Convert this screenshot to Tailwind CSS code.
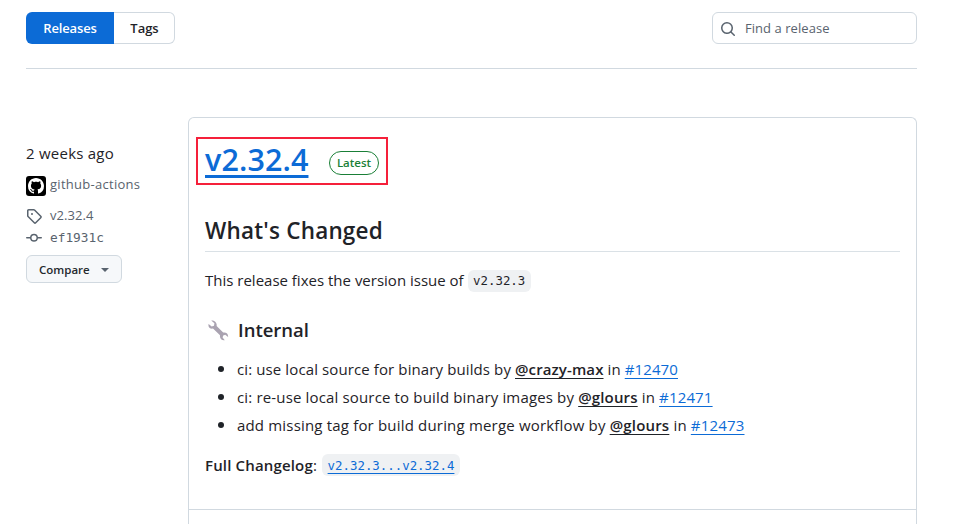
<!DOCTYPE html>
<html lang="en">
<head>
<meta charset="utf-8">
<title>Releases</title>
<script src="https://cdn.jsdelivr.net/npm/@tailwindcss/browser@4"></script>
</head>
<body class="h-[524px] overflow-hidden bg-white pl-[26px] pr-[50px] pt-3 font-['Open_Sans','Noto_Sans',sans-serif] text-[15px] text-[#1f2328]">
<header class="flex h-[57px] justify-between border-b border-[#d1d9e0]">
  <nav class="flex h-8 w-[149px] text-[13px] font-semibold leading-8">
    <a class="w-[88px] rounded-l-md bg-[#0c6bd6] text-center tracking-[-0.14px] text-white">Releases</a>
    <a class="flex-1 rounded-r-md border border-l-0 border-[#d1d9e0] pl-px text-center leading-[30px]">Tags</a>
  </nav>
  <label class="flex h-8 w-[205px] items-center rounded-md border border-[#d1d9e0] pl-[7px] text-[13px] text-[#59636e]">
    <svg class="mr-[9px] mt-px size-4" viewBox="0 0 16 16" fill="currentColor"><path d="M10.68 11.74a6 6 0 0 1-7.922-8.982 6 6 0 0 1 8.982 7.922l3.04 3.04a.749.749 0 1 1-1.06 1.06l-3.04-3.04ZM11.5 7a4.499 4.499 0 1 0-8.997 0A4.499 4.499 0 0 0 11.5 7Z"/></svg>
    <span class="mt-px tracking-[0.05px]">Find a release</span>
  </label>
</header>
<main class="mt-12 flex">
  <aside class="w-[162px] pt-6 text-[13px] text-[#59636e]">
    <div class="h-6 text-[15px] leading-6 text-[#1f2328]"><span class="tracking-[0.24px]">2 weeks ago</span></div>
    <div class="mt-[11px] flex h-5 items-center gap-1">
      <span class="flex size-5 items-center justify-center rounded-[3px] bg-black text-white"><svg class="size-4" viewBox="0 0 16 16" fill="currentColor"><path d="M8 0c4.42 0 8 3.58 8 8a8.013 8.013 0 0 1-5.45 7.59c-.4.08-.55-.17-.55-.38 0-.27.01-1.13.01-2.2 0-.75-.25-1.23-.54-1.48 1.78-.2 3.65-.88 3.65-3.95 0-.88-.31-1.59-.82-2.15.08-.2.36-1.02-.08-2.12 0 0-.67-.22-2.2.82-.64-.18-1.32-.27-2-.27-.68 0-1.36.09-2 .27-1.53-1.03-2.2-.82-2.2-.82-.44 1.1-.16 1.92-.08 2.12-.51.56-.82 1.28-.82 2.15 0 3.06 1.86 3.75 3.64 3.95-.23.2-.44.55-.51 1.07-.46.21-1.61.55-2.33-.66-.15-.24-.6-.83-1.23-.82-.67.01-.27.38.01.53.34.19.73.9.82 1.13.16.45.68 1.31 2.69.94 0 .67.01 1.3.01 1.49 0 .21-.15.45-.55.38A7.995 7.995 0 0 1 0 8c0-4.42 3.58-8 8-8Z"/></svg></span>
      <span class="-mt-[5px] leading-5 tracking-[0.28px]">github-actions</span>
    </div>
    <div class="mt-[9px] flex h-[22px] items-center gap-2">
      <svg class="size-4" viewBox="0 0 16 16" fill="currentColor"><path d="M1 7.775V2.75C1 1.784 1.784 1 2.75 1h5.025c.464 0 .91.184 1.238.513l6.25 6.25a1.75 1.75 0 0 1 0 2.474l-5.026 5.026a1.75 1.75 0 0 1-2.474 0l-6.25-6.25A1.752 1.752 0 0 1 1 7.775Zm1.5 0c0 .066.026.13.073.177l6.25 6.25a.25.25 0 0 0 .354 0l5.025-5.025a.25.25 0 0 0 0-.354l-6.25-6.25a.25.25 0 0 0-.177-.073H2.75a.25.25 0 0 0-.25.25ZM6 5a1 1 0 1 1 0 2 1 1 0 0 1 0-2Z"/></svg>
      <span class="tracking-[0.08px]">v2.32.4</span>
    </div>
    <div class="flex h-[22px] items-center gap-2">
      <svg class="size-4" viewBox="0 0 16 16" fill="currentColor"><path d="M11.93 8.5a4.002 4.002 0 0 1-7.86 0H.75a.75.75 0 0 1 0-1.5h3.32a4.002 4.002 0 0 1 7.86 0h3.32a.75.75 0 0 1 0 1.5Zm-1.43-.75a2.5 2.5 0 1 0-5 0 2.5 2.5 0 0 0 5 0Z"/></svg>
      <span class="font-['DejaVu_Sans_Mono',monospace] text-[12.8px]">ef1931c</span>
    </div>
    <button class="mt-[6px] flex h-7 w-24 items-center justify-between rounded-md border border-[#d1d9e0] bg-[#f6f8fa] pl-3 pr-3 text-[11.5px] font-semibold text-[#25292e]"><span class="mt-0.5">Compare</span><svg class="mt-px h-1 w-2" viewBox="0 0 8 4" fill="#59636e"><path d="M0 0h8L4 4Z"/></svg></button>
  </aside>
  <article class="h-[430px] flex-1 rounded-t-md border border-b-0 border-[#d1d9e0]">
    <section class="h-[392px] border-b border-[#d1d9e0] pl-[16px] pr-4 pt-[19px]">
      <div class="-ml-[9px] flex h-12 w-48 items-center border-2 border-[#f5203a] pl-[7px]">
        <h1 class="-mt-1 w-[124px] text-[30.5px] font-semibold leading-[44px] text-[#0c6bd6]"><a class="tracking-[0.1px] underline decoration-[3px] underline-offset-[4px] [text-decoration-skip-ink:none]">v2.32.4</a></h1>
        <span class="mt-1 flex h-6 w-[50px] items-center justify-center rounded-full border border-[#1a7f37] text-[11.5px] font-semibold text-[#1a7f37]">Latest</span>
      </div>
      <h2 class="mt-[30px] h-[37px] border-b border-[#d1d9e0]/80 text-[22.5px] font-semibold leading-8"><span class="tracking-[0.2px]">What's Changed</span></h2>
      <p class="mt-4 flex h-6 items-center"><span>This release fixes the version issue of</span><code class="ml-1 mt-px flex h-[22px] w-[63px] items-center justify-center rounded-md bg-[#eff1f3] pt-0.5 font-['DejaVu_Sans_Mono',monospace] text-[12.4px]">v2.32.3</code></p>
      <h3 class="mt-[26px] flex h-6 items-center text-[18.5px] font-semibold">
        <svg class="ml-[3px] mr-[9px] size-[21px]" viewBox="0 0 21 21" fill="#aaa3b1"><path d="M3.2.5 6.4 3.2 6 5.8 3.7 6.4.6 4C-.2 7 2 9.2 5 8.6L12 15.3c-.6 3 1.8 5.4 4.8 4.9L14.6 17.5l.6-2 2-.7 2.9 2.1c.3-3-2-5-4.9-4.3L8.6 6C9.3 2.6 6.3.1 3.2.5Z"/></svg>
        <span>Internal</span></h3>
      <ul class="mt-3 list-disc pl-8 leading-7 marker:text-[18px]">
        <li class="h-7"><span class="tracking-[0.11px]">ci: use local source for binary builds by <a class="font-semibold underline underline-offset-[3px] [text-decoration-skip-ink:none]">@crazy-max</a> in <a class="text-[#0c6bd6] underline underline-offset-[3px]">#12470</a></span></li>
        <li class="h-7"><span class="tracking-[0.155px]">ci: re-use local source to build binary images by <a class="font-semibold underline underline-offset-[3px] [text-decoration-skip-ink:none]">@glours</a> in <a class="text-[#0c6bd6] underline underline-offset-[3px]">#12471</a></span></li>
        <li class="h-7"><span class="tracking-[0.18px]">add missing tag for build during merge workflow by <a class="font-semibold underline underline-offset-[3px] [text-decoration-skip-ink:none]">@glours</a> in <a class="text-[#0c6bd6] underline underline-offset-[3px]">#12473</a></span></li>
      </ul>
      <p class="mt-[15px] flex h-6 items-center tracking-[0.16px]"><strong class="font-semibold">Full Changelog</strong>:<code class="ml-[5px] flex h-[22px] w-[138px] items-center justify-center rounded-md bg-[#eff1f3] pt-0.5 font-['DejaVu_Sans_Mono',monospace] text-[12.4px] tracking-normal text-[#0c6bd6]"><a class="underline underline-offset-[3px]">v2.32.3...v2.32.4</a></code></p>
    </section>
  </article>
</main>
</body>
</html>
